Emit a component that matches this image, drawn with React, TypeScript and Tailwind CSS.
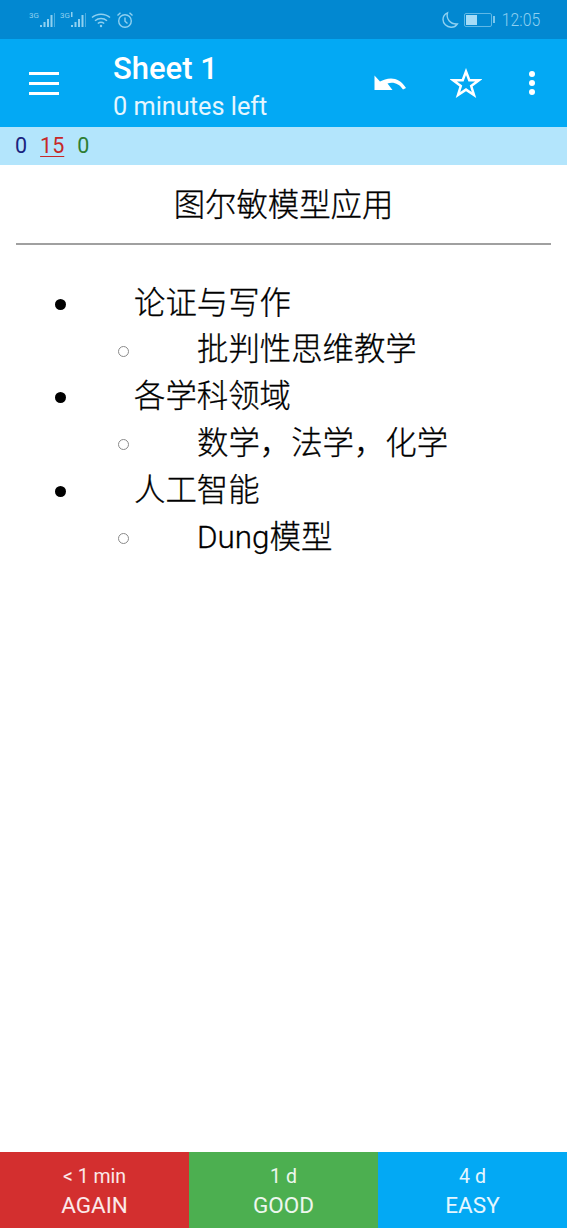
const cjk = { fontFamily: 'Roboto, "Noto Sans CJK SC", sans-serif' };

function Signal({ extra }: { extra?: boolean }) {
  return (
    <svg width="26" height="18" viewBox="0 0 26 18" className="block" fill="currentColor">
      <text x="0" y="7" fontSize="8" fontFamily="Roboto, sans-serif">3G</text>
      {extra && <rect x="11" y="1" width="1.5" height="5" />}
      <rect x="11" y="14" width="2" height="2" />
      <rect x="14.5" y="11" width="2" height="5" />
      <rect x="18" y="8" width="2" height="8" />
      <rect x="21.5" y="4" width="2" height="12" />
      <rect x="25" y="2" width="1" height="14" opacity="0.5" />
    </svg>
  );
}

function Wifi() {
  return (
    <svg width="20" height="16" viewBox="0 0 20 16" fill="none" stroke="currentColor" strokeWidth="1.5" className="block">
      <path d="M1 5.5C6 1 14 1 19 5.5" />
      <path d="M4 8.7C7.500 5.700 12.500 5.700 16 8.700" />
      <path d="M6.800 11.500C8.700 10 11.300 10 13.200 11.500" />
      <circle cx="10" cy="14" r="1.200" fill="currentColor" stroke="none" />
    </svg>
  );
}

function Alarm() {
  return (
    <svg width="18" height="18" viewBox="0 0 18 18" fill="none" stroke="currentColor" strokeWidth="1.400" className="block">
      <circle cx="9" cy="10" r="6.300" />
      <path d="M9 6.500V10.200L11.500 12.500" />
      <path d="M1.500 4.500L4.500 1.700M16.500 4.500L13.500 1.700" />
    </svg>
  );
}

function Moon() {
  return (
    <svg width="18" height="18" viewBox="0 0 18 18" fill="none" stroke="currentColor" strokeWidth="1.400" className="block">
      <path d="M6.500 1.800C5 7.500 9 13.500 16.300 13C14.800 15.300 12.500 16.300 10 16.200C5.500 16 2 12.500 2 8.500C2 5.500 3.800 3 6.500 1.800Z" />
    </svg>
  );
}

function Battery() {
  return (
    <div className="flex items-center">
      <div className="flex h-[14px] w-[28px] rounded-[2px] border border-[#5fb8e6] p-[1px]">
        <div className="h-full w-[11px] bg-[#a5dcf7]" />
      </div>
      <div className="ml-[1px] h-[7px] w-[2px] bg-[#7cc6ec]" />
    </div>
  );
}

function Undo() {
  return (
    <svg width="34" height="20" viewBox="0 0 34 20" fill="white" className="block">
      <path d="M12 6.500C19 4 27.500 5.500 33 15L30 16.500C26 10 19.500 8.500 14.500 10.500L19.500 17H1.500V2.500L7 8.500C8.500 7.700 10 7 12 6.500Z" />
    </svg>
  );
}

function Star() {
  return (
    <svg width="32" height="30" viewBox="0 0 32 30" fill="none" stroke="white" strokeWidth="2.500" strokeLinejoin="miter" className="block">
      <path d="M16 3.500L19.300 12.300H28.800L21.200 18L24 27L16 21.600L8 27L10.800 18L3.200 12.300H12.700Z" />
    </svg>
  );
}

function Hamburger() {
  return (
    <div className="ml-[29px] flex w-[30px] flex-col gap-[7px]">
      <div className="h-[3px] bg-white" />
      <div className="h-[3px] bg-white" />
      <div className="h-[3px] bg-white" />
    </div>
  );
}

function Kebab() {
  return (
    <div className="flex flex-col gap-[3px]">
      <div className="size-[6px] rounded-full bg-white" />
      <div className="size-[6px] rounded-full bg-white" />
      <div className="size-[6px] rounded-full bg-white" />
    </div>
  );
}

function Row({ level, text }: { level: 1 | 2; text: string }) {
  return (
    <li className={level === 1 ? "flex h-[46.800px] items-center pl-[55px]" : "flex h-[46.800px] items-center pl-[118px]"}>
      {level === 1 ? (
        <span className="size-[11px] shrink-0 rounded-full bg-black" />
      ) : (
        <span className="size-[11px] shrink-0 rounded-full border border-[#8a8a8a]" />
      )}
      <span className="mb-[2px] ml-[68px] text-[31.400px] font-light leading-none text-black [-webkit-text-stroke:0.3px_black]" style={cjk}>
        {text}
      </span>
    </li>
  );
}

function Answer({ time, label, color }: { time: string; label: string; color: string }) {
  return (
    <button className={`flex h-full flex-col items-center justify-center pt-[3px] ${color}`}>
      <span className="text-[19.500px] leading-[28px] text-white/90">{time}</span>
      <span className="text-[22.500px] leading-[29px] text-white/90">{label}</span>
    </button>
  );
}

export default function App() {
  return (
    <div className="flex h-[1228px] w-[567px] flex-col overflow-hidden bg-white font-['Roboto',sans-serif]">
      <div className="flex h-[39px] items-center justify-between bg-[#0288d1] pl-[29px] pr-[27px] text-[#8fd0f0]">
        <div className="flex items-center gap-[5px]">
          <Signal />
          <Signal extra />
          <Wifi />
          <Alarm />
        </div>
        <div className="flex items-center">
          <Moon />
          <div className="ml-[5px]">
            <Battery />
          </div>
          <span className="ml-[-1px] origin-right scale-x-[0.83] text-[19px] font-light leading-none">12:05</span>
        </div>
      </div>

      <div className="flex h-[88px] items-center bg-[#03a9f4] text-white">
        <Hamburger />
        <div className="ml-[54px] flex-1 pt-[9px]">
          <div className="text-[31px] font-medium leading-[38px]">Sheet 1</div>
          <div className="text-[25.300px] leading-[38px] text-white/90">0 minutes left</div>
        </div>
        <Undo />
        <div className="ml-[43px]">
          <Star />
        </div>
        <div className="ml-[47px] mr-[32px]">
          <Kebab />
        </div>
      </div>

      <div className="flex h-[38px] items-center gap-[13px] bg-[#b3e5fc] pl-[15px] text-[21.500px]">
        <span className="text-[#1a237e]">0</span>
        <span className="text-[#c62828] underline decoration-1 underline-offset-3">15</span>
        <span className="text-[#2e7d32]">0</span>
      </div>

      <main className="flex-1">
        <h1 className="pt-[23px] text-center text-[31.400px] font-light leading-[36px] text-black [-webkit-text-stroke:0.3px_black]" style={cjk}>
          图尔敏模型应用
        </h1>
        <hr className="mx-[16px] mt-[19px] border-t-2 border-[#a0a0a0]" />
        <ul className="mt-[36px]">
          <Row level={1} text="论证与写作" />
          <Row level={2} text="批判性思维教学" />
          <Row level={1} text="各学科领域" />
          <Row level={2} text="数学，法学，化学" />
          <Row level={1} text="人工智能" />
          <Row level={2} text="Dung模型" />
        </ul>
      </main>

      <div className="grid h-[76px] grid-cols-[189px_189px_189px]">
        <Answer time="< 1 min" label="AGAIN" color="bg-[#d32f2f]" />
        <Answer time="1 d" label="GOOD" color="bg-[#4caf50]" />
        <Answer time="4 d" label="EASY" color="bg-[#03a9f4]" />
      </div>
    </div>
  );
}
